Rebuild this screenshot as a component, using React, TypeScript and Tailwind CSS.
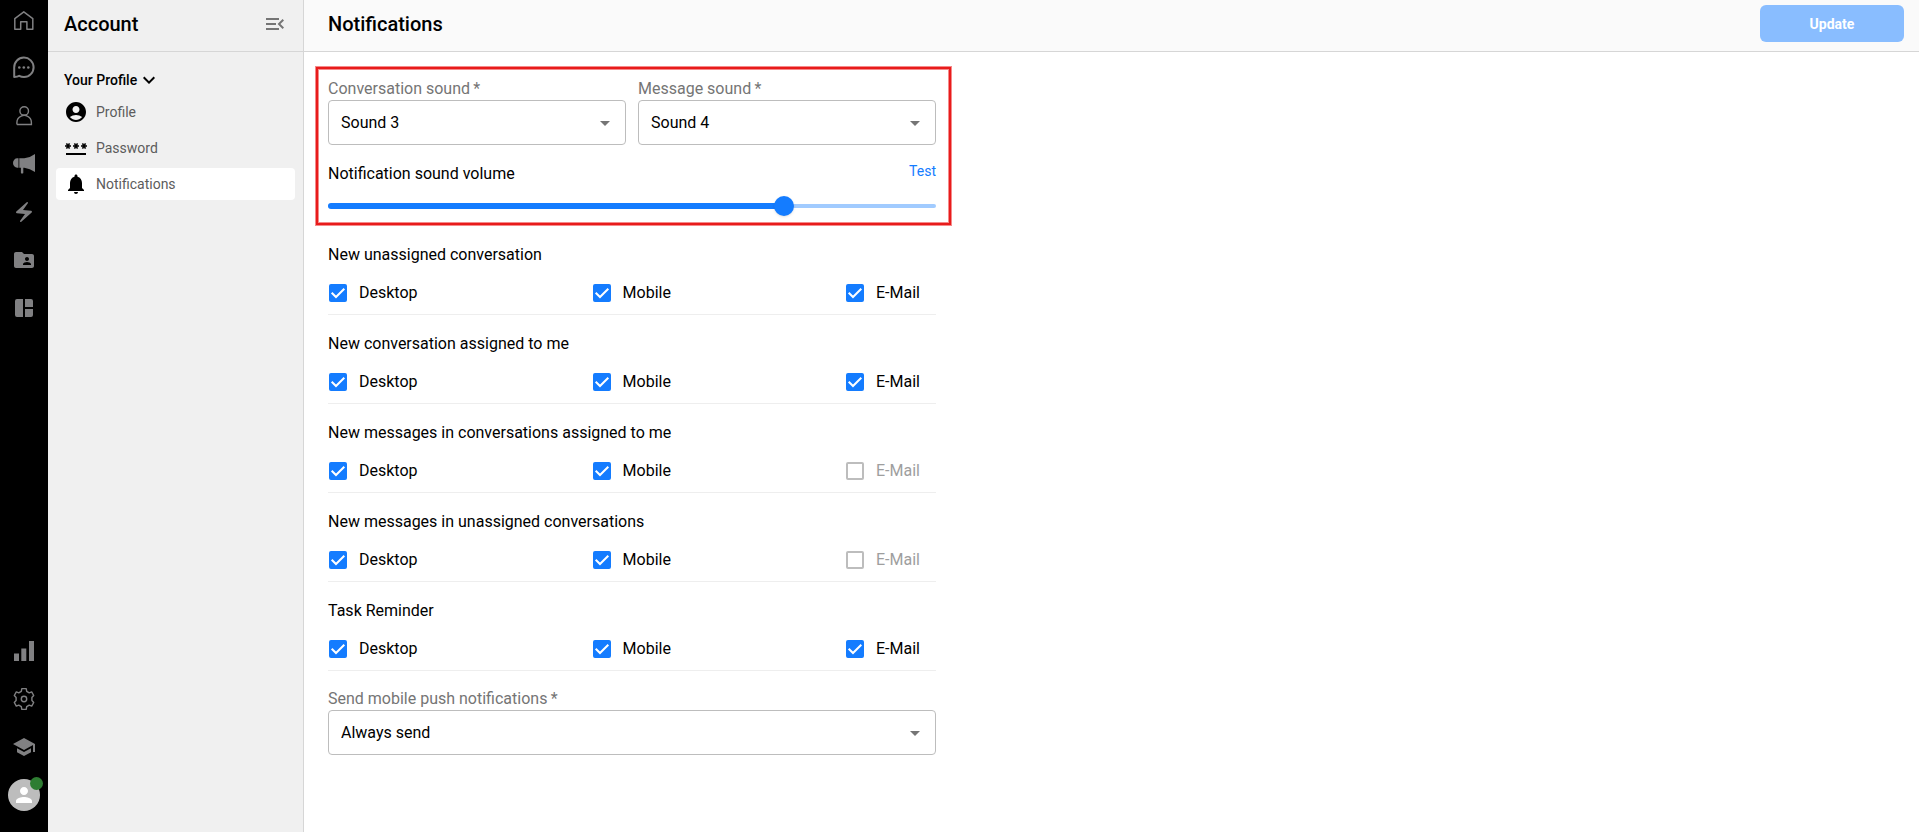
import { useState } from "react";
import type { ReactNode } from "react";
import {
  MdAccountCircle,
  MdArrowDropDown,
  MdElectricBolt,
  MdFolderShared,
  MdKeyboardArrowDown,
  MdMenuOpen,
  MdNotifications,
  MdPassword,
  MdPerson,
  MdSchool,
} from "react-icons/md";

function HomeIcon() {
  return (
    <svg viewBox="0 0 24 24" className="size-6" fill="none" stroke="currentColor" strokeWidth="1.5">
      <path d="M2.8 10.6 11.8 3.8l9 6.8v10.7h-5.9v-7.5H8.7v7.5H2.8z" strokeLinejoin="round" />
    </svg>
  );
}

function ChatIcon() {
  return (
    <svg viewBox="0 0 24 24" className="size-6" fill="none" stroke="currentColor" strokeWidth="2">
      <path d="M2.2 20.9V11.4A9.700 9.700 0 1 1 12 21q-2.600 0-4.800-1.200-1.700 1-5 1.100z" strokeLinejoin="round" />
      <g fill="currentColor" stroke="none">
        <circle cx="7.300" cy="11.500" r="1.300" />
        <circle cx="11.800" cy="11.500" r="1.300" />
        <circle cx="16.300" cy="11.500" r="1.300" />
      </g>
    </svg>
  );
}

function PersonIcon() {
  return (
    <svg viewBox="0 0 24 24" className="size-6" fill="none" stroke="currentColor" strokeWidth="1.4">
      <circle cx="12.200" cy="7" r="4.300" />
      <path d="M4.900 20.500v-1.900a7 7 0 0 1 4.300-6.400M15.200 12.200a7 7 0 0 1 4.200 6.400v1.900H4.900M9.200 12.200q3-1.800 6 0" />
    </svg>
  );
}

function MegaphoneIcon() {
  return (
    <svg viewBox="0 0 24 24" className="size-6" fill="currentColor">
      <path d="M6.500 6.300v9.400H5.200A4.200 4.700 0 0 1 5.200 6.300z" />
      <path d="M7.300 6.300h5Q18 5.800 23 2v18q-5-3.600-10.700-4.300h-1V20.800q0 .6-.6.6H9.500q-.6 0-.6-.6v-5.100H7.300z" />
    </svg>
  );
}

function DashboardIcon() {
  return (
    <svg viewBox="0 0 24 24" className="size-6" fill="currentColor">
      <path d="M11 21H5a2 2 0 0 1-2-2V5a2 2 0 0 1 2-2h6zM13 21h6a2 2 0 0 0 2-2v-6h-8zM21 11V5a2 2 0 0 0-2-2h-6v8z" />
    </svg>
  );
}

function BarsIcon() {
  return (
    <svg viewBox="0 0 24 24" className="size-6" fill="currentColor">
      <path d="M2 14.500h5V22H2zM9.300 9.500h5V22h-5zM17 2h5v20h-5z" />
    </svg>
  );
}

function GearIcon() {
  return (
    <svg viewBox="0 0 24 24" className="size-6" fill="none" stroke="currentColor" strokeWidth="1.4" strokeLinejoin="round">
      <path d="M9.300 4.400 9.800 1.600h4.400l.5 2.800 2.500 1.500 2.500-1 2 3.600-1.800 2v3l1.800 2-2 3.600-2.500-1-2.500 1.500-.5 2.800H9.800l-.5-2.800-2.500-1.500-2.500 1-2-3.600 1.800-2v-3l-1.800-2 2-3.600 2.500 1z" />
      <circle cx="12" cy="12" r="2.700" />
    </svg>
  );
}

function RailLink({ label, children }: { label: string; children: ReactNode }) {
  return (
    <a href="#" aria-label={label} className="flex size-6 items-center justify-center text-[#808082]">
      {children}
    </a>
  );
}

function Rail() {
  return (
    <nav aria-label="Main" className="flex w-12 shrink-0 flex-col items-center justify-between bg-black pt-2 pb-[25px]">
      <div className="flex flex-col gap-6">
        <RailLink label="Home"><HomeIcon /></RailLink>
        <RailLink label="Conversations"><ChatIcon /></RailLink>
        <RailLink label="Contacts"><PersonIcon /></RailLink>
        <RailLink label="Campaigns"><MegaphoneIcon /></RailLink>
        <RailLink label="Automations"><MdElectricBolt className="size-6" /></RailLink>
        <RailLink label="Shared files"><MdFolderShared className="size-6" /></RailLink>
        <RailLink label="Boards"><DashboardIcon /></RailLink>
      </div>
      <div className="flex flex-col gap-6">
        <RailLink label="Reports"><BarsIcon /></RailLink>
        <RailLink label="Settings"><GearIcon /></RailLink>
        <RailLink label="Academy"><MdSchool className="size-6" /></RailLink>
        <RailLink label="My account">
          <span className="relative flex size-8 shrink-0 items-center justify-center rounded-full bg-[#bdbdbd] text-white">
            <MdPerson className="size-6" />
            <span className="absolute -top-0.5 -right-[3px] size-[13px] rounded-full bg-[#2e7d32]" />
          </span>
        </RailLink>
      </div>
    </nav>
  );
}

const profileLinks = [
  { label: "Profile", Icon: MdAccountCircle, active: false },
  { label: "Password", Icon: MdPassword, active: false },
  { label: "Notifications", Icon: MdNotifications, active: true },
];

function Sidebar() {
  return (
    <aside className="w-64 shrink-0 border-r border-[#d6d6d6] bg-[#f0f0f0]">
      <div className="flex h-13 items-center justify-between border-b border-[#d6d6d6] px-4 pb-1">
        <h2 className="text-xl font-medium">Account</h2>
        <button type="button" aria-label="Collapse menu" className="text-[#757575]">
          <MdMenuOpen className="size-6" />
        </button>
      </div>
      <div className="flex flex-col px-2 pt-3">
        <button type="button" className="flex h-8 items-center pl-2 text-sm font-medium">
          Your Profile
          <MdKeyboardArrowDown className="size-6" />
        </button>
        <ul className="flex flex-col gap-1">
          {profileLinks.map(({ label, Icon, active }) => (
            <li key={label}>
              <a
                href="#"
                aria-current={active ? "page" : undefined}
                className={`flex h-8 items-center gap-2 rounded pl-2 text-sm text-[#5c5c5c] ${active ? "bg-white" : ""}`}
              >
                <Icon className="size-6 text-black" />
                {label}
              </a>
            </li>
          ))}
        </ul>
      </div>
    </aside>
  );
}

function SelectField({ id, label, options, initial }: { id: string; label: string; options: string[]; initial: string }) {
  return (
    <div className="flex min-w-0 flex-1 flex-col">
      <label htmlFor={id} className="leading-[22px] text-[#757575]">{label}{"\u2009"}*</label>
      <div className="relative">
        <select
          id={id}
          defaultValue={initial}
          className="h-[45px] w-full appearance-none rounded border border-[#bdbdbd] bg-white pr-8 pl-3 outline-none"
        >
          {options.map((option) => (
            <option key={option}>{option}</option>
          ))}
        </select>
        <MdArrowDropDown className="pointer-events-none absolute inset-y-0 right-[9px] my-auto size-6 text-[#757575]" />
      </div>
    </div>
  );
}

function VolumeSlider() {
  const [volume, setVolume] = useState(75);
  return (
    <div className="relative mt-[9px] flex h-5 items-center">
      <div className="h-1 w-full rounded-full bg-[#a1cbff]" />
      <div className="absolute left-0 h-1.5 rounded-full bg-[#147cff]" style={{ width: `${volume}%` }} />
      <input
        id="volume"
        type="range"
        value={volume}
        onChange={(event) => setVolume(Number(event.target.value))}
        className="absolute -inset-x-2.5 h-5 cursor-pointer appearance-none bg-transparent outline-none [&::-webkit-slider-thumb]:size-5 [&::-webkit-slider-thumb]:appearance-none [&::-webkit-slider-thumb]:rounded-full [&::-webkit-slider-thumb]:bg-[#147cff] [&::-webkit-slider-thumb]:shadow"
      />
    </div>
  );
}

function Option({ label, enabled }: { label: string; enabled: boolean }) {
  return (
    <label className={`mr-4 flex h-6 items-center gap-3 pl-px ${enabled ? "" : "text-[#9e9e9e]"}`}>
      <span className="relative flex size-[18px]">
        <input
          type="checkbox"
          defaultChecked={enabled}
          disabled={!enabled}
          className="peer size-full appearance-none rounded-xs border-2 border-[#757575] checked:border-[#147cff] checked:bg-[#147cff] disabled:border-[#bdbdbd]"
        />
        <svg
          viewBox="0 0 18 18"
          className="pointer-events-none absolute inset-0 hidden peer-checked:block"
          fill="none"
          stroke="white"
          strokeWidth="2"
        >
          <path d="M2.700 8.700 7 13l8.300-8.300" />
        </svg>
      </span>
      {label}
    </label>
  );
}

const channelGroups = [
  { title: "New unassigned conversation", email: true },
  { title: "New conversation assigned to me", email: true },
  { title: "New messages in conversations assigned to me", email: false },
  { title: "New messages in unassigned conversations", email: false },
  { title: "Task Reminder", email: true },
];

function ChannelGroup({ title, email }: { title: string; email: boolean }) {
  return (
    <fieldset className="border-b border-[#eeeeee] pt-[17px] pb-[9px]">
      <legend className="contents">
        <span className="block leading-6">{title}</span>
      </legend>
      <div className="mt-3.5 flex justify-between">
        <Option label="Desktop" enabled />
        <Option label="Mobile" enabled />
        <Option label="E-Mail" enabled={email} />
      </div>
    </fieldset>
  );
}

export default function App() {
  return (
    <div className="flex min-h-screen bg-white font-[Roboto,sans-serif] text-base text-black">
      <Rail />
      <Sidebar />
      <main className="min-w-0 flex-1">
        <header className="flex h-13 items-center justify-between border-b border-[#d6d6d6] bg-[#fafafa] pr-[15px] pb-1 pl-6">
          <h1 className="text-xl font-medium">Notifications</h1>
          <button type="button" disabled className="h-[37px] w-36 rounded-md bg-[#89bdff] text-sm font-bold text-white">
            Update
          </button>
        </header>
        <form className="max-w-[659px] pt-[15px]">
          <div className="mr-3 mb-px ml-3 border-2 border-[#e81c1c] pt-[9px] pr-[13px] pb-[7px] pl-[10px] shadow-[0_0_0_1px_#f58a8a,inset_0_0_0_1px_#f58a8a]">
            <div className="flex gap-3">
              <SelectField
                id="conversation-sound"
                label="Conversation sound"
                options={["Sound 1", "Sound 2", "Sound 3", "Sound 4"]}
                initial="Sound 3"
              />
              <SelectField
                id="message-sound"
                label="Message sound"
                options={["Sound 1", "Sound 2", "Sound 3", "Sound 4"]}
                initial="Sound 4"
              />
            </div>
            <div className="mt-4 flex items-start justify-between">
              <label htmlFor="volume" className="leading-[26px]">Notification sound volume</label>
              <button type="button" className="text-sm text-[#147cff]">Test</button>
            </div>
            <VolumeSlider />
          </div>
          <div className="mr-[27px] ml-6">
            {channelGroups.map((group) => (
              <ChannelGroup key={group.title} {...group} />
            ))}
            <div className="mt-[17px] flex">
              <SelectField
                id="push"
                label="Send mobile push notifications"
                options={["Always send", "Only when offline", "Never send"]}
                initial="Always send"
              />
            </div>
          </div>
        </form>
      </main>
    </div>
  );
}
